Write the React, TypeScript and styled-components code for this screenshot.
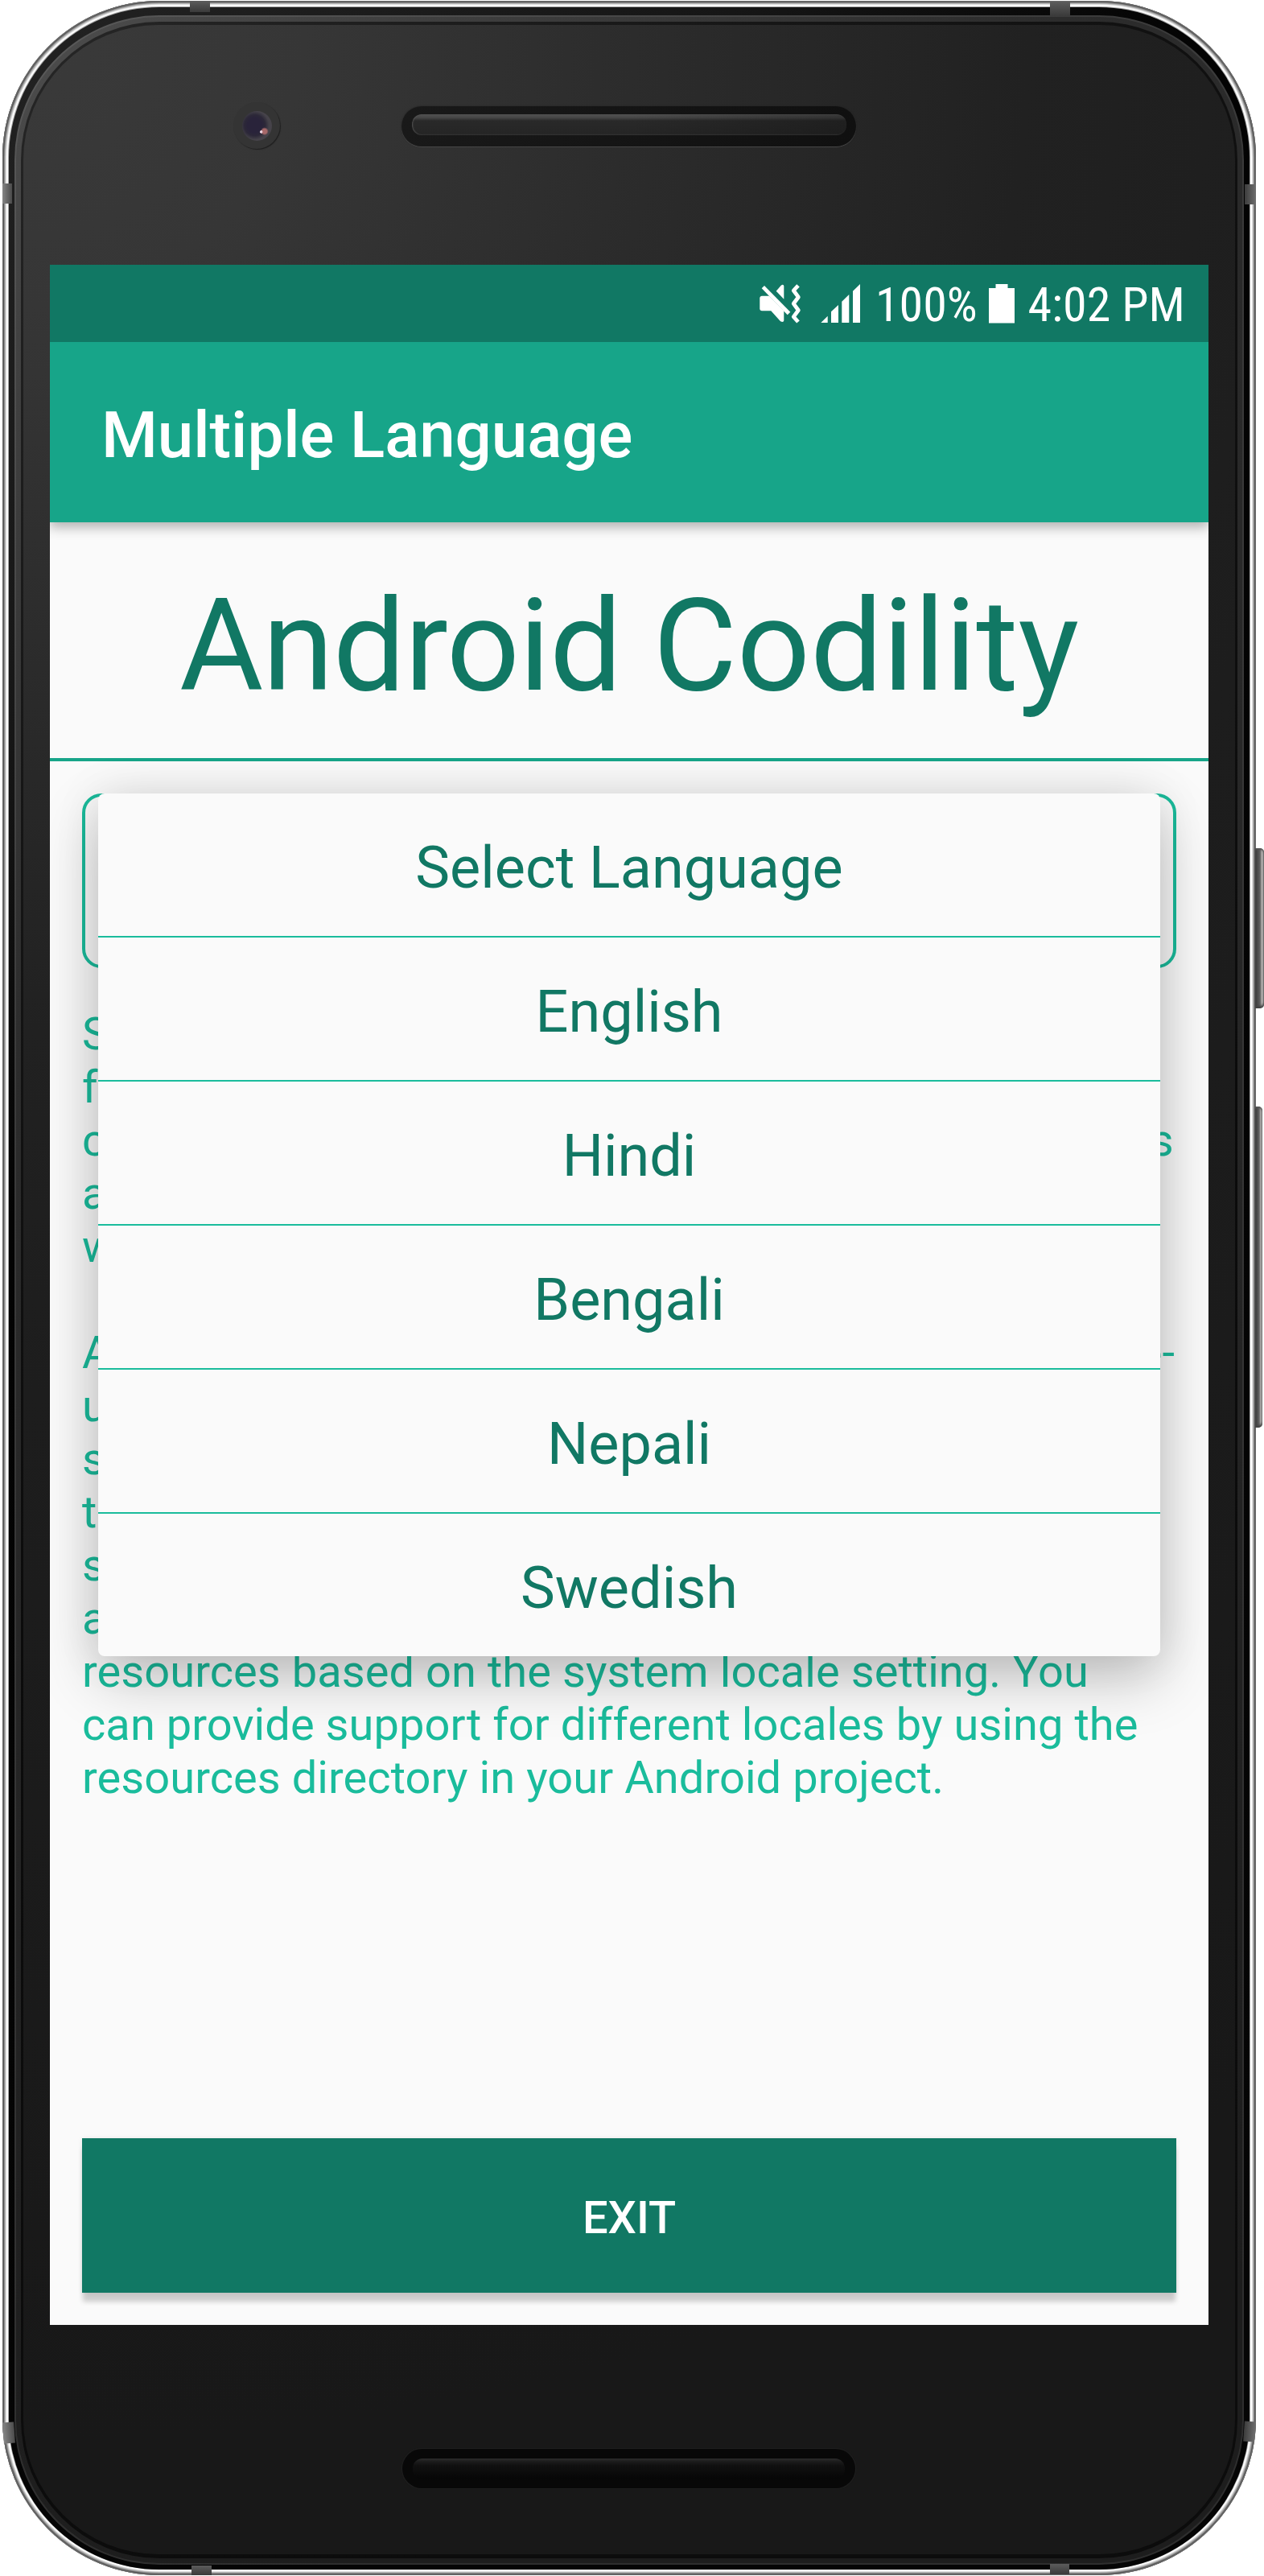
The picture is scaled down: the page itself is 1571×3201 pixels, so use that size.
import React from "react";
import styled, { createGlobalStyle } from "styled-components";

const color = {
  dark: "#117864",
  primary: "#17a589",
  accent: "#1abc9c",
  surface: "#fafafa",
};

const GlobalStyle = createGlobalStyle`
  * { box-sizing: border-box; }
  body { margin: 0; background: #fff; font-family: Roboto, "Liberation Sans", sans-serif; }
`;

const Stage = styled.div`
  position: relative;
  width: 1571px;
  height: 3201px;
  padding: 1px 10px 1px 3px;
  overflow: hidden;
`;

const MetalRim = styled.div`
  height: 3199px;
  padding: 8px 8px 7px;
  border-radius: 195px;
  background: #e4e4e4;
  box-shadow:
    inset 0 0 0 1px #6b6b6b,
    inset 0 0 0 2px #5a5a5a,
    inset 0 0 0 3px #8d8d8d,
    inset 0 0 0 4px #b4b4b4,
    inset 0 0 0 5px #dedede,
    inset 0 0 0 7px #fcfcfc,
    inset 0 0 0 9px #a8a8a8;
`;

const Bumper = styled.div`
  height: 100%;
  padding: 10px 7px 6px;
  border-radius: 187px;
  background: radial-gradient(circle at 0 0, #222 0, #161616 900px, #030303 1500px, #050505 3200px);
`;

const Lip = styled.div`
  height: 100%;
  padding: 8px;
  border-radius: 180px;
  background: radial-gradient(circle at 0 0, #4c4c4c 0, #3f3f3f 500px, #2c2c2c 1300px, #262626 2000px, #1d1d1d 3200px);
  box-shadow: inset 0 0 0 2px rgba(255, 255, 255, 0.08);
`;

const Groove = styled.div`
  height: 100%;
  padding: 4px 3px 5px;
  border-radius: 172px;
  background: radial-gradient(circle at 0 0, #262626 0, #151515 1000px, #0b0b0b 2000px, #0c0c0c 3200px);
`;

const Face = styled.div`
  display: flex;
  flex-direction: column;
  align-items: flex-start;
  height: 100%;
  padding-left: 33px;
  border-radius: 168px;
  background: radial-gradient(
    circle at 0 0,
    #3a3a3a 0,
    #363636 350px,
    #2b2b2b 800px,
    #212121 1250px,
    #1d1d1d 1700px,
    #181818 3000px
  );
`;

const TopBezel = styled.div`
  display: flex;
  align-items: flex-start;
  height: 298px;
  padding: 96px 0 0 228px;
`;

const Camera = styled.div`
  display: grid;
  place-items: center;
  width: 58px;
  height: 58px;
  margin-right: 151px;
  border-radius: 50%;
  background: #343434;
  box-shadow: 1px 1px 1px #1f1f1f;
`;

const Lens = styled.div`
  width: 37px;
  height: 37px;
  border-radius: 50%;
  background:
    radial-gradient(circle at 64% 70%, #e9d3e0 0 1.5px, transparent 2px),
    radial-gradient(circle at 75% 68%, #a8696a 0 3px, transparent 5px),
    radial-gradient(circle at 42% 48%, #29233a 0 9px, #2c2838 13px, #46434a 18px);
`;

const TopSpeaker = styled.div`
  width: 565px;
  height: 50px;
  margin-top: 5px;
  padding: 10px 12px 14px 13px;
  border-radius: 25px;
  background: linear-gradient(90deg, #191919, #101010);
  box-shadow: 0 1px 1px #4a4a4a, 0 0 2px #222;
`;

const TopSlot = styled.div`
  height: 100%;
  border-radius: 12px;
  background: linear-gradient(90deg, transparent 50%, rgba(18, 18, 18, 0.4)),
    linear-gradient(#515151 0, #474747 4px, #292929 8px, #252525);
  box-shadow: inset 1px 0 2px #555;
`;

const BottomBezel = styled.div`
  padding: 154px 0 0 438px;
`;

const BottomSpeaker = styled.div`
  width: 563px;
  height: 49px;
  padding: 12px 13px 11px;
  border-radius: 25px;
  background: #080808;
  box-shadow: 0 0 1px 1px #202020;
`;

const BottomSlot = styled.div`
  height: 100%;
  border-radius: 12px;
  background: linear-gradient(#2c2c2c 0, #1b1b1b 4px, #101010 9px, #060606);
`;

const Screen = styled.main`
  position: relative;
  display: flex;
  flex-direction: column;
  flex: none;
  width: 1440px;
  height: 2560px;
  overflow: hidden;
  background: ${color.surface};
`;

const StatusBar = styled.div`
  position: relative;
  z-index: 1;
  display: flex;
  align-items: flex-start;
  flex: none;
  height: 96px;
  padding: 24px 0 0 882px;
  background: ${color.dark};
  color: #fff;
`;

const StatusIcon = styled.svg<{ $gap: number }>`
  flex: none;
  height: 49px;
  margin-right: ${(p) => p.$gap}px;
  fill: currentColor;
  overflow: visible;
`;

const StatusText = styled.span<{ $width: number }>`
  flex: none;
  width: ${(p) => p.$width}px;
  margin-top: -9px;
  font-family: "Roboto Condensed", Roboto, sans-serif;
  font-size: 60px;
  line-height: 70px;
  white-space: nowrap;
`;

const AppBar = styled.header`
  position: relative;
  flex: none;
  height: 224px;
  padding: 69px 64px 0;
  background: ${color.primary};
  color: #fff;
  font-size: 80px;
  font-weight: 500;
  line-height: 94px;
  letter-spacing: -0.1px;
  box-shadow: 0 6px 14px rgba(0, 0, 0, 0.3);
`;

const Title = styled.h1`
  flex: none;
  height: 297px;
  margin: 0;
  padding-top: 60px;
  border-bottom: 4px solid ${color.primary};
  color: ${color.dark};
  font-size: 160px;
  font-weight: 400;
  line-height: 188px;
  letter-spacing: -0.15px;
  text-align: center;
`;

const TightWord = styled.span`
  letter-spacing: -0.95px;
`;

const Content = styled.section`
  display: flex;
  flex-direction: column;
  flex: 1;
  padding: 40px;
`;

const Spinner = styled.div`
  height: 217px;
  border: 4px solid ${color.accent};
  border-radius: 24px;
`;

const Description = styled.p`
  margin: 49px 0 0;
  color: ${color.accent};
  font-size: 56px;
  line-height: 66px;
  letter-spacing: 0.06px;
`;

const Line = styled.span<{ $fill?: boolean }>`
  display: block;
  width: 1358px;
  min-height: 66px;
  white-space: nowrap;
  text-align-last: ${(p) => (p.$fill ? "justify" : "left")};
`;

const ExitButton = styled.button`
  height: 192px;
  margin-top: auto;
  padding: 5px 0 0;
  border: 0;
  background: ${color.dark};
  color: #fff;
  font: 500 56px/66px Roboto, "Liberation Sans", sans-serif;
  box-shadow: 0 12px 6px -1px rgba(0, 0, 0, 0.19), 0 0 6px rgba(0, 0, 0, 0.08);
`;

const Popup = styled.ul`
  position: absolute;
  top: 657px;
  left: 60px;
  width: 1320px;
  margin: 0;
  padding: 0;
  border-radius: 8px;
  background: ${color.surface};
  list-style: none;
  box-shadow: 0 28px 72px rgba(0, 0, 0, 0.23), 0 0 60px rgba(0, 0, 0, 0.09);
`;

const Option = styled.li`
  height: 179px;
  padding-top: 50px;
  border-bottom: 2px solid ${color.accent};
  color: ${color.dark};
  font-size: 72px;
  line-height: 85px;
  text-align: center;

  &:last-child {
    height: 177px;
    border-bottom: 0;
  }
`;

const SideButton = styled.div<{ $top: number; $height: number; $width: number }>`
  position: absolute;
  top: ${(p) => p.$top}px;
  left: 1560px;
  width: ${(p) => p.$width}px;
  height: ${(p) => p.$height}px;
  border-radius: 0 5px 5px 0;
  background: linear-gradient(90deg, #3a3a3a, #565656 45%, #6a6a6a 58%, #c4c0be 80%, #8d8d8d);
  box-shadow: inset 0 2px 2px #555, inset 0 -3px 3px #444;
`;

const Antenna = styled.div<{ $x: number; $y: number; $w: number; $h: number; $tilt?: number }>`
  position: absolute;
  left: ${(p) => p.$x}px;
  top: ${(p) => p.$y}px;
  width: ${(p) => p.$w}px;
  height: ${(p) => p.$h}px;
  background: ${(p) =>
    p.$w > p.$h
      ? "linear-gradient(#5c5c5c, #3a3a3a)"
      : p.$x < 700
        ? "linear-gradient(90deg, #858585, #4a4a4a)"
        : "linear-gradient(270deg, #6e6e6e, #3c3c3c)"};
  transform: rotate(${(p) => p.$tilt ?? 0}deg);
`;

const languages = ["Select Language", "English", "Hindi", "Bengali", "Nepali", "Swedish"];

const description = [
  "Spinners provide a quick way to select one value",
  "from a set. In the default state, a spinner shows its",
  "currently selected value. Touching the spinner displays",
  "a dropdown menu with all other available values, from",
  "which the user can select a new one.",
  "",
  "Android apps may also run in many regions and place-",
  "unique needs on text. To reach most users, an app",
  "should handle text, numbers, files, currencies and",
  "the graphics in ways that suit the locales where",
  "such apps are used. The Android system finds",
  "and loads the right language, and it selects",
  "resources based on the system locale setting. You",
  "can provide support for different locales by using the",
  "resources directory in your Android project.",
];

export default function App() {
  return (
    <Stage>
      <GlobalStyle />
      <MetalRim>
        <Bumper>
          <Lip>
            <Groove>
              <Face>
                <TopBezel>
                  <Camera>
                    <Lens />
                  </Camera>
                  <TopSpeaker>
                    <TopSlot />
                  </TopSpeaker>
                </TopBezel>
                <Screen>
                  <StatusBar>
                    <StatusIcon viewBox="0 0 51 49" width="51" $gap={25}>
                      <path d="M2.7 5.3 6 2 38.3 34.7 34.7 38.3Z" />
                      <path d="M2.7 14.7H12L30.3 33.3V45.3Q30 48 26 46.3L14.3 33.3H2.7Q.3 33 .3 31V17Q.5 14.9 2.7 14.7Z" />
                      <path d="M20.7 8.7 26.7 1.8Q29.8-.6 30.3 2.6V18.7Z" />
                      <path
                        d="M48 1.8 42.3 8 48.3 16.2 42.3 24.3 48.3 32.5 42.3 40.6 48 47"
                        fill="none"
                        stroke="currentColor"
                        strokeWidth="4.8"
                        strokeLinejoin="round"
                      />
                    </StatusIcon>
                    <StatusIcon viewBox="0 0 49 49" width="49" $gap={19}>
                      <path d="M.3 48H8.7V39.7ZM13 48V34.3L22 26V48ZM26.3 48V21.7L35.3 13V48ZM40 48V8.7L49 0V48Z" />
                    </StatusIcon>
                    <StatusText $width={141}>100%</StatusText>
                    <StatusIcon viewBox="0 0 32 49" width="32" $gap={16.5}>
                      <path d="M8.5 0H23.5V5H32V48.5H0V5H8.5Z" />
                    </StatusIcon>
                    <StatusText $width={200}>4:02 PM</StatusText>
                  </StatusBar>
                  <AppBar>Multiple Language</AppBar>
                  <Title>
                    <TightWord>Android</TightWord> Codility
                  </Title>
                  <Content>
                    <Spinner />
                    <Description>
                      {description.map((line, i) => (
                        <Line key={i} $fill={line.endsWith("-")}>
                          {line}
                        </Line>
                      ))}
                    </Description>
                    <ExitButton>EXIT</ExitButton>
                  </Content>
                  <Popup>
                    {languages.map((name) => (
                      <Option key={name}>{name}</Option>
                    ))}
                  </Popup>
                </Screen>
                <BottomBezel>
                  <BottomSpeaker>
                    <BottomSlot />
                  </BottomSpeaker>
                </BottomBezel>
              </Face>
            </Groove>
          </Lip>
        </Bumper>
      </MetalRim>
      <SideButton $top={1054} $height={199} $width={11} />
      <SideButton $top={1375} $height={399} $width={9} />
      <Antenna $x={236} $y={1} $w={25} $h={14} />
      <Antenna $x={1305} $y={2} $w={25} $h={18} />
      <Antenna $x={3} $y={228} $w={12} $h={25} />
      <Antenna $x={1547} $y={229} $w={14} $h={25} />
      <Antenna $x={4} $y={3010} $w={14} $h={26} $tilt={-4} />
      <Antenna $x={1546} $y={3009} $w={14} $h={25} $tilt={4} />
      <Antenna $x={238} $y={3188} $w={25} $h={12} />
      <Antenna $x={1305} $y={3186} $w={24} $h={13} />
    </Stage>
  );
}
